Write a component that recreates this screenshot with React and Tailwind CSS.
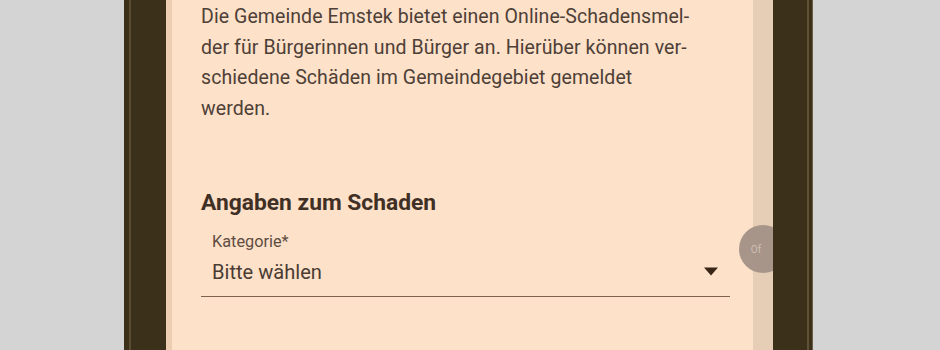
export default function App() {
  return (
    <div className="flex h-[350px] w-[940px] overflow-hidden bg-[#d4d4d4]" style={{ fontFamily: "Roboto, 'Noto Sans', sans-serif" }}>
      <div className="w-[124px] shrink-0" />
      <div className="flex w-[42px] shrink-0 bg-[#3b3019]">
        <div className="w-[5px]" />
        <div className="w-[2px] bg-[#5a4c30]" />
      </div>
      <div className="relative flex w-[607px] shrink-0 overflow-hidden">
        <div className="w-[6px] shrink-0 bg-[#eccdb2]" />
        <div className="w-[581px] shrink-0 bg-[#fde1c9] pl-[29px] pr-[23px] text-[#4e4037]">
          <div className="pt-[2px] text-[19.5px] leading-[30.5px] tracking-[0.08px]">
            <p>Die Gemeinde Emstek bietet einen Online-Schadensmel-</p>
            <p>der für Bürgerinnen und Bürger an. Hierüber können ver-</p>
            <p>schiedene Schäden im Gemeindegebiet gemeldet</p>
            <p>werden.</p>
          </div>
          <h2 className="mt-[66px] text-[22.8px] font-bold leading-[26px] text-[#3f2f24]">Angaben zum Schaden</h2>
          <div className="mt-[17px] border-b-[1.5px] border-[#7f614d]">
            <div className="pl-[11px] text-[16.3px] leading-[18px] text-[#5e4d42]">Kategorie*</div>
            <div className="flex items-center justify-between pb-[11px] pl-[11px] pr-[11px] pt-[8px]">
              <span className="text-[20.1px] leading-[26px] text-[#4a3b32]">Bitte wählen</span>
              <svg width="16" height="9" viewBox="0 0 16 9" className="mb-[2px]">
                <path d="M1 0.5 L15 0.5 L8 8.5 Z" fill="#3a2618" />
              </svg>
            </div>
          </div>
        </div>
        <div className="w-[20px] shrink-0 bg-[#e6cdb6]" />
        <div className="absolute left-[573px] top-[225px] flex h-[48px] w-[48px] items-center justify-center rounded-full bg-[#a8958a]">
          <span className="ml-[-14px] text-[10px] text-[#cdbfb3]">Of</span>
        </div>
      </div>
      <div className="flex w-[40px] shrink-0 bg-[#3b3019]">
        <div className="w-[34px]" />
        <div className="w-[2px] bg-[#5f5236]" />
        <div className="w-[3px]" />
        <div className="w-[1px] bg-[#6b5e45]" />
      </div>
      <div className="flex-1" />
    </div>
  );
}
